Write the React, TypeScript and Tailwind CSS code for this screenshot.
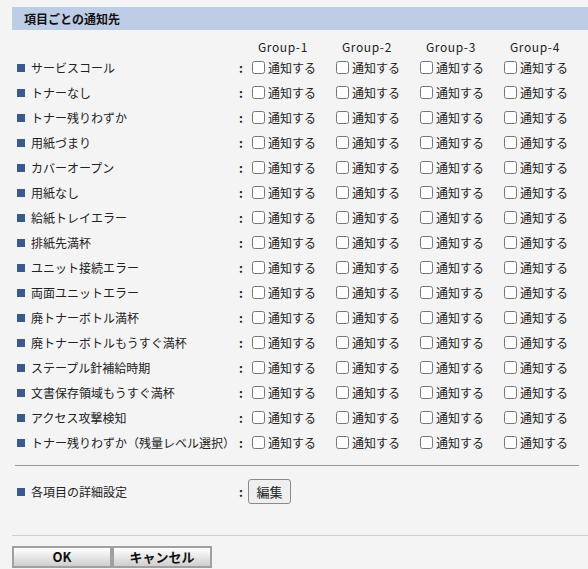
import React from "react";

const items = [
  "サービスコール",
  "トナーなし",
  "トナー残りわずか",
  "用紙づまり",
  "カバーオープン",
  "用紙なし",
  "給紙トレイエラー",
  "排紙先満杯",
  "ユニット接続エラー",
  "両面ユニットエラー",
  "廃トナーボトル満杯",
  "廃トナーボトルもうすぐ満杯",
  "ステープル針補給時期",
  "文書保存領域もうすぐ満杯",
  "アクセス攻撃検知",
  "トナー残りわずか（残量レベル選択）",
];

const groups = ["Group-1", "Group-2", "Group-3", "Group-4"];

export default function App() {
  return (
    <div
      className="min-h-[569px] bg-[#f4f4f4] pl-[12px] pt-[7px] text-[12px] text-[#222]"
      style={{ fontFamily: '"Noto Sans CJK JP", "Noto Sans", sans-serif' }}
    >
      <div className="h-[23px] bg-[#bdcde6] pl-[12px] font-bold leading-[23px] text-[#111]">
        項目ごとの通知先
      </div>

      <div className="mt-[8px] flex h-[17px] items-center">
        <div className="w-[240px] shrink-0" />
        {groups.map((g) => (
          <div key={g} className="w-[84px] shrink-0 pl-[6px] leading-[17px] tracking-[0.6px]">
            {g}
          </div>
        ))}
      </div>

      <div className="flex flex-col">
        {items.map((label) => (
          <div key={label} className="flex h-[25px] items-center">
            <div className="flex w-[229px] shrink-0 items-center pl-[5px]">
              <span className="h-[8px] w-[8px] shrink-0 bg-[#3b5a8c]" />
              <span className="ml-[6px] whitespace-nowrap leading-[16px]">{label}</span>
            </div>
            <div className="ml-[-2px] w-[13px] shrink-0 font-bold leading-[16px]">:</div>
            {groups.map((g) => (
              <label key={g} className="flex w-[84px] shrink-0 items-center">
                <input type="checkbox" className="m-0 h-[13px] w-[13px]" />
                <span className="ml-[3px] leading-[16px]">通知する</span>
              </label>
            ))}
          </div>
        ))}
      </div>

      <div className="ml-[3px] mr-[9px] mt-[10px] h-px bg-[#9a9a9a]" />

      <div className="mt-[13px] flex h-[25px] items-center">
        <div className="flex w-[229px] shrink-0 items-center pl-[5px]">
          <span className="h-[8px] w-[8px] shrink-0 bg-[#3b5a8c]" />
          <span className="ml-[6px] whitespace-nowrap leading-[16px]">各項目の詳細設定</span>
        </div>
        <div className="ml-[-2px] w-[9px] shrink-0 font-bold leading-[16px]">:</div>
        <button className="h-[25px] w-[43px] rounded-[3px] border border-[#8a8a8a] bg-[#efefef] text-[13px] leading-[16px] text-[#222]">
          編集
        </button>
      </div>

      <div className="mt-[31px] h-px bg-[#cfcfcf]" />

      <div className="mt-[10px] flex">
        <button className="h-[22px] w-[100px] border-2 border-[#a0a0a0] bg-gradient-to-b from-white to-[#cfcfcf] text-[13px] font-bold leading-[16px] text-[#111]">
          OK
        </button>
        <button className="h-[22px] w-[100px] border-2 border-[#a0a0a0] bg-gradient-to-b from-white to-[#cfcfcf] text-[13px] font-bold leading-[16px] text-[#111]">
          キャンセル
        </button>
      </div>
    </div>
  );
}
